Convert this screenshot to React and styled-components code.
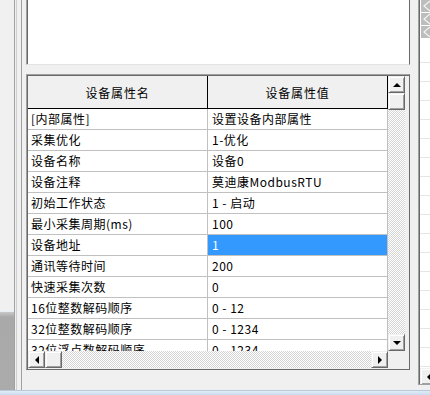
import React from "react";
import styled, { createGlobalStyle, css } from "styled-components";

const GlobalStyle = createGlobalStyle`
  html, body {
    margin: 0;
    padding: 0;
    background: #f0f0f0;
  }
  body {
    font-family: "Noto Sans CJK SC", "Liberation Sans", sans-serif;
    font-size: 12px;
    color: #000;
  }
`;

const Screen = styled.div`
  width: 430px;
  height: 395px;
  overflow: hidden;
  display: flex;
  flex-direction: column;
  background: #f0f0f0;
`;

const Main = styled.div`
  display: flex;
  height: 390px;
`;

const Taskbar = styled.div`
  flex: 1;
  background: linear-gradient(#e2ecf7, #cadcef);
  border-top: 1px solid #b8c9dc;
`;

const LeftStrip = styled.div`
  width: 14px;
  display: flex;
  flex-direction: column;
  .top {
    height: 311px;
    background: #f0f0f0;
  }
  .bottom {
    flex: 1;
    border-top: 1px solid #e8eef5;
    background: linear-gradient(#c9c9c9, #a9a9a9 5px, #ababab);
  }
`;

const WindowEdge = styled.div`
  border-left: 1px solid #a0a0a0;
  padding-left: 1px;
  display: flex;
`;

const Pane = styled.div`
  border-left: 1px solid #cfcfcf;
  padding-left: 4px;
  display: flex;
`;

const Group = styled.div`
  border-left: 1px solid #a0a0a0;
  padding: 0 8px 0 4px;
  display: flex;
  flex-direction: column;
  width: 384px;
`;

const TextBox = styled.div`
  height: 65px;
  box-sizing: border-box;
  background: #fff;
  border-left: 1px solid #a0a0a0;
  border-right: 1px solid #6a6a6a;
  border-bottom: 1px solid #e3e3e3;
  box-shadow: inset 1px 0 #696969;
`;

const GridBox = styled.div`
  margin-top: 9px;
  height: 296px;
  box-sizing: border-box;
  border-top: 1px solid #a0a0a0;
  border-left: 1px solid #a0a0a0;
  border-right: 1px solid #6a6a6a;
  border-bottom: 1px solid #6a6a6a;
  box-shadow: inset 1px 1px #696969;
  padding: 1px 0 0 1px;
  display: grid;
  grid-template-columns: 360px 17px 1fr;
  grid-template-rows: 275px 17px 1fr;
  background: #f0f0f0;
`;

const Viewport = styled.div`
  overflow: hidden;
  background: #fff;
`;

const HeaderRow = styled.div`
  display: grid;
  grid-template-columns: 180px 180px;
  height: 33px;
  box-sizing: border-box;
  border-bottom: 1px solid #000;
  background: #f0f0f0;
`;

const HeaderCell = styled.div`
  border-right: 1px solid #000;
  display: flex;
  align-items: center;
  justify-content: center;
  letter-spacing: 0.8px;
  padding-top: 1px;
`;

const Row = styled.div`
  display: grid;
  grid-template-columns: 180px 180px;
  height: 21px;
`;

const Cell = styled.div`
  border-right: 1px solid #c0c0c0;
  border-bottom: 1px solid #c0c0c0;
  line-height: 20px;
  padding-left: ${(p) => (p.$value ? 4 : 3)}px;
  white-space: nowrap;
  overflow: hidden;
  letter-spacing: 0.5px;
  ${(p) =>
    p.$selected &&
    css`
      background: #3399ff;
      color: #fff;
    `}
`;

const hatch = css`
  background-color: #fff;
  background-image: repeating-conic-gradient(#d6d6d6 0 25%, #fff 0 50%);
  background-size: 2px 2px;
`;

const VScroll = styled.div`
  display: flex;
  flex-direction: column;
`;

const HScroll = styled.div`
  display: flex;
`;

const Track = styled.div`
  flex: 1;
  ${hatch}
`;

const Raised = styled.div`
  width: 17px;
  height: 17px;
  flex: none;
  box-sizing: border-box;
  background: #f0f0f0;
  border: 1px solid;
  border-color: #f0f0f0 #696969 #696969 #f0f0f0;
  box-shadow: inset 1px 1px #fff, inset -1px -1px #a0a0a0;
  display: flex;
  align-items: center;
  justify-content: center;
`;

const arrows = {
  up: css`
    border-left: 4px solid transparent;
    border-right: 4px solid transparent;
    border-bottom: 4px solid #000;
  `,
  down: css`
    border-left: 4px solid transparent;
    border-right: 4px solid transparent;
    border-top: 4px solid #000;
  `,
  left: css`
    border-top: 4px solid transparent;
    border-bottom: 4px solid transparent;
    border-right: 4px solid #000;
  `,
  right: css`
    border-top: 4px solid transparent;
    border-bottom: 4px solid transparent;
    border-left: 4px solid #000;
  `,
};

const Arrow = styled.span`
  width: 0;
  height: 0;
  ${(p) => arrows[p.$dir]}
`;

const ArrowButton = ({ dir }) => (
  <Raised>
    <Arrow $dir={dir} />
  </Raised>
);

const Corner = styled.div`
  background: #f0f0f0;
  ${(p) =>
    p.$edge &&
    css`
      grid-row: 1 / span 3;
      grid-column: 3;
    `}
`;

const RightPanel = styled.div`
  width: 12px;
  height: 385px;
  box-sizing: border-box;
  background: #fff;
  border-left: 1px solid #a0a0a0;
  border-bottom: 1px solid #a0a0a0;
  box-shadow: inset 1px 0 #696969;
  padding-left: 1px;
  display: flex;
  flex-direction: column;
  overflow: hidden;
`;

const ListArea = styled.div`
  flex: 1;
  overflow: hidden;
`;

const Thumb = styled.div`
  width: 10px;
  height: 12px;
  margin: 0 0 1px 1px;
  background: #bdbdbd;
  display: flex;
  align-items: center;
`;

const ListLine = styled.div`
  height: ${(p) => (p.$first ? 24 : 19)}px;
  box-sizing: border-box;
  border-bottom: 1px solid #e6e6e6;
`;

const RightScroll = styled.div`
  height: 16px;
  display: flex;
  background: #f0f0f0;
`;

const rows = [
  ["[内部属性]", "设置设备内部属性"],
  ["采集优化", "1-优化"],
  ["设备名称", "设备0"],
  ["设备注释", "莫迪康ModbusRTU"],
  ["初始工作状态", "1 - 启动"],
  ["最小采集周期(ms)", "100"],
  ["设备地址", "1"],
  ["通讯等待时间", "200"],
  ["快速采集次数", "0"],
  ["16位整数解码顺序", "0 - 12"],
  ["32位整数解码顺序", "0 - 1234"],
  ["32位浮点数解码顺序", "0 - 1234"],
];

const selectedRow = 6;

export default function App() {
  return (
    <Screen>
      <GlobalStyle />
      <Main>
        <LeftStrip>
          <div className="top" />
          <div className="bottom" />
        </LeftStrip>
        <WindowEdge>
          <Pane>
            <Group>
              <TextBox />
              <GridBox>
                <Viewport>
                  <HeaderRow>
                    <HeaderCell>设备属性名</HeaderCell>
                    <HeaderCell>设备属性值</HeaderCell>
                  </HeaderRow>
                  {rows.map(([name, value], i) => (
                    <Row key={name}>
                      <Cell>{name}</Cell>
                      <Cell $value $selected={i === selectedRow}>
                        {value}
                      </Cell>
                    </Row>
                  ))}
                </Viewport>
                <VScroll>
                  <ArrowButton dir="up" />
                  <Raised />
                  <Track />
                  <ArrowButton dir="down" />
                </VScroll>
                <Corner $edge />
                <HScroll>
                  <ArrowButton dir="left" />
                  <Raised />
                  <Track />
                  <ArrowButton dir="right" />
                </HScroll>
                <Corner />
              </GridBox>
            </Group>
            <RightPanel>
              <ListArea>
                {[0, 1, 2].map((k) => (
                  <Thumb key={k}>
                    <svg width="10" height="12" viewBox="0 0 10 12">
                      <polyline
                        points="9,1 3,6 9,11"
                        fill="none"
                        stroke="#f4f4f4"
                        strokeWidth="1.2"
                      />
                    </svg>
                  </Thumb>
                ))}
                {Array.from({ length: 17 }, (_, k) => (
                  <ListLine key={k} $first={k === 0} />
                ))}
              </ListArea>
              <RightScroll>
                <ArrowButton dir="left" />
              </RightScroll>
            </RightPanel>
          </Pane>
        </WindowEdge>
      </Main>
      <Taskbar />
    </Screen>
  );
}
